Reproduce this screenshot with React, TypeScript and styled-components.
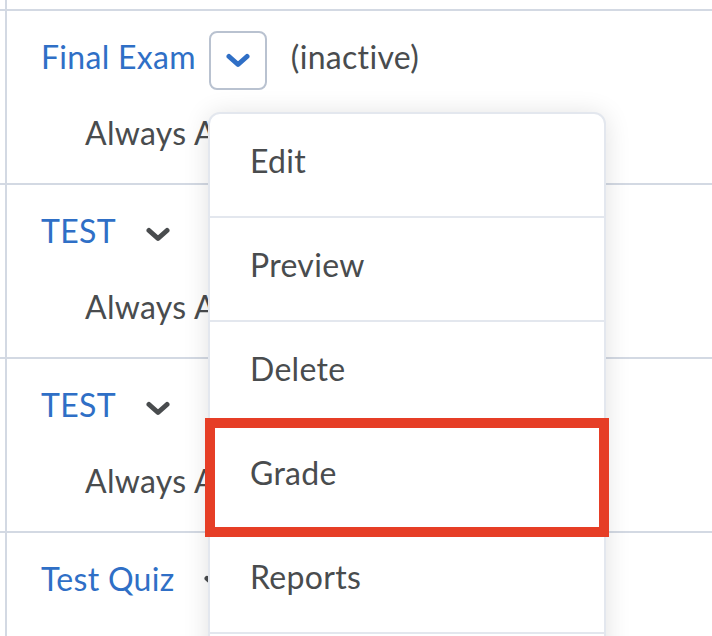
import styled, {createGlobalStyle, css} from "styled-components";

const GlobalStyle = createGlobalStyle`
  html, body {
    margin: 0;
    padding: 0;
    background: #ffffff;
    overflow: hidden;
  }
  body {
    font-family: Lato, "Liberation Sans", sans-serif;
    color: #494c4e;
    letter-spacing: 0.3px;
  }
`

const Page = styled.div`
  position: relative;
  width: 712px;
  height: 636px;
  overflow: hidden;
`

const Row = styled.div<{ stub?: boolean }>`
  display: grid;
  grid-template-columns: 7px 1fr;
  height: ${props => props.stub ? '9px' : '172px'};
  border-top: ${props => props.stub ? 'none' : '2px solid #d3d9e3'};
`

const Gutter = styled.div`
  border-right: 2px solid #d3d9e3;
`

const Cell = styled.div`
  padding: 20px 0 0 34px;
  white-space: nowrap;
`

const TitleLine = styled.div`
  display: flex;
  align-items: flex-start;
  height: 59px;
`

const TitleLink = styled.a`
  font-size: 32px;
  line-height: 51px;
  color: #2f6fc6;
  text-decoration: none;
  cursor: pointer;
`

const ChevronButton = styled.button<{ focused?: boolean }>`
  display: flex;
  align-items: center;
  justify-content: center;
  box-sizing: border-box;
  width: 58px;
  height: 59px;
  margin-left: 13px;
  padding: 0;
  background: transparent;
  border: 2px solid transparent;
  border-radius: 8px;
  color: #494c4e;
  ${props => props.focused && css`
    border-color: #b9c2d0;
    color: #2f6fc6;
  `}
`

const Status = styled.span`
  font-size: 32px;
  line-height: 51px;
  margin-left: 24px;
`

const Availability = styled.div`
  margin: 23px 0 0 44px;
  font-size: 32px;
  line-height: 40px;
`

const Menu = styled.ul`
  position: absolute;
  top: 112px;
  left: 208px;
  width: 398px;
  box-sizing: border-box;
  margin: 0;
  padding: 0 0 40px;
  list-style: none;
  background: #ffffff;
  border: 2px solid #e3e7ee;
  border-radius: 12px;
  box-shadow: 0 2px 26px rgba(0, 0, 0, 0.12);
`

const MenuItem = styled.li<{ highlighted?: boolean }>`
  position: relative;
  box-sizing: border-box;
  height: 104px;
  padding: 27px 0 0 40px;
  border-bottom: 2px solid #e3e7ee;
  font-size: 32px;
  line-height: 40px;
  color: #494c4e;

  ${props => props.highlighted && css`
    &::after {
      content: "";
      position: absolute;
      top: -8px;
      left: -5px;
      right: -5px;
      bottom: -9px;
      border: 10px solid #e63e26;
    }
  `}
`

const Chevron = () => (
  <svg width="24" height="15" viewBox="0 0 24 15" fill="none">
    <path d="M3 3.5 L12 11.5 L21 3.5" stroke="currentColor" strokeWidth="5" strokeLinecap="round"
          strokeLinejoin="round"/>
  </svg>
)

type QuizProps = {
  title: string;
  focused?: boolean;
  inactive?: boolean;
};

const QuizRow = ({title, focused, inactive}: QuizProps) => (
  <Row>
    <Gutter/>
    <Cell>
      <TitleLine>
        <TitleLink>{title}</TitleLink>
        <ChevronButton focused={focused}><Chevron/></ChevronButton>
        {inactive && <Status>(inactive)</Status>}
      </TitleLine>
      <Availability>Always Available</Availability>
    </Cell>
  </Row>
)

const actions = ['Edit', 'Preview', 'Delete', 'Grade', 'Reports']

export default function App() {
  return <>
    <GlobalStyle/>
    <Page>
      <Row stub><Gutter/><div/></Row>
      <QuizRow title="Final Exam" focused inactive/>
      <QuizRow title="TEST"/>
      <QuizRow title="TEST"/>
      <QuizRow title="Test Quiz"/>
      <Menu>
        {actions.map(a => <MenuItem key={a} highlighted={a === 'Grade'}>{a}</MenuItem>)}
      </Menu>
    </Page>
  </>
}
